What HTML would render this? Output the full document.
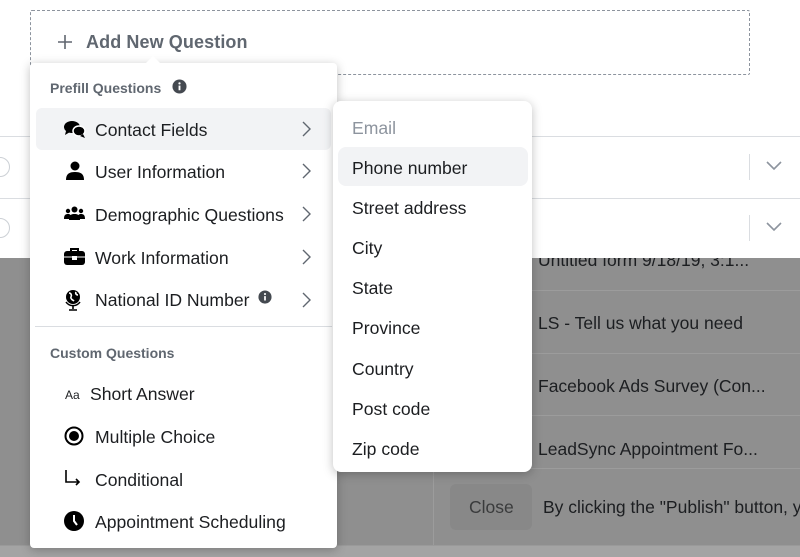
<!DOCTYPE html>
<html><head><meta charset="utf-8"><style>
*{box-sizing:border-box;margin:0;padding:0}
body{width:800px;height:557px;overflow:hidden;position:relative;background:#8f8f8f;font-family:"Liberation Sans",Helvetica,Arial,sans-serif;color:#1c1e21}
.abs{position:absolute}
.top{left:0;top:0;width:800px;height:258px;background:#fff}
.dash{left:30px;top:10px;width:720px;height:65px;border:1px dashed #8d949e;border-radius:2px}
.add{left:86px;top:32px;font-size:18px;font-weight:bold;color:#606770;letter-spacing:0.1px}
.hl{left:0;width:800px;height:1px;background:#dadde1}
.circ{left:-10px;width:20px;height:20px;border:1px solid #ccd0d5;border-radius:50%}
.vd{left:749px;width:1px;height:26px;background:#dadde1}
.chev{left:766px;width:16px;height:10px}
.gl{left:433px;width:367px;height:1px;background:#9c9c9c}
.gt{left:538px;font-size:17.5px;color:#1c1e21}
.menu{left:30px;top:63px;width:307px;height:485px;background:#fff;border-radius:4px;box-shadow:0 2px 10px rgba(0,0,0,.25)}
.sub{left:333px;top:101px;width:199px;height:371px;background:#fff;border-radius:8px;box-shadow:0 2px 10px rgba(0,0,0,.25)}
.it{position:absolute;font-size:17.6px;color:#1c1e21;white-space:nowrap}
.hdr{position:absolute;font-size:14px;font-weight:bold;color:#606770}
.ic{position:absolute;left:34px}
.ch{position:absolute;left:272px;width:10px;height:16px}
</style></head><body>
<div class="abs gt" style="top:250px">Untitled form 9/18/19, 3:1...</div>
<div class="abs top"></div>
<div class="abs dash"></div>
<svg class="abs" style="left:57px;top:34px" width="16" height="16" viewBox="0 0 16 16"><path d="M8 1v14M1 8h14" stroke="#606770" stroke-width="1.6"/></svg>
<div class="abs add">Add New Question</div>
<div class="abs hl" style="top:136px"></div>
<div class="abs hl" style="top:198px"></div>
<div class="abs circ" style="top:157px"></div>
<div class="abs circ" style="top:218px"></div>
<div class="abs vd" style="top:154px"></div>
<div class="abs vd" style="top:215px"></div>
<svg class="abs chev" style="top:161px" viewBox="0 0 16 10"><path d="M1 1l7 7 7-7" fill="none" stroke="#8d949e" stroke-width="1.6"/></svg>
<svg class="abs chev" style="top:222px" viewBox="0 0 16 10"><path d="M1 1l7 7 7-7" fill="none" stroke="#8d949e" stroke-width="1.6"/></svg>

<div class="abs gl" style="top:290px"></div>
<div class="abs gt" style="top:313px">LS - Tell us what you need</div>
<div class="abs gl" style="top:353px"></div>
<div class="abs gt" style="top:376px">Facebook Ads Survey (Con...</div>
<div class="abs gl" style="top:415px"></div>
<div class="abs gt" style="top:439px">LeadSync Appointment Fo...</div>
<div class="abs gl" style="top:468px"></div>
<div class="abs" style="left:433px;top:468px;width:1px;height:78px;background:#9c9c9c"></div>
<div class="abs" style="left:450px;top:484px;width:82px;height:46px;background:#888;border-radius:6px"></div>
<div class="abs" style="left:469px;top:497px;font-size:17.5px;color:#3a3b3c">Close</div>
<div class="abs" style="left:543px;top:497px;font-size:17.5px;color:#1c1e21;white-space:nowrap">By clicking the "Publish" button, yo</div>
<div class="abs" style="left:0;top:545px;width:800px;height:12px;background:#a4a4a4;border-top:1px solid #9a9a9a"></div>

<div class="abs menu">
<svg class="abs" style="left:115px;top:-8px" width="16" height="9"><path d="M0 9L8 1L16 9Z" fill="#fff"/></svg>
<div class="hdr" style="left:20px;top:17px">Prefill Questions</div>
<svg class="abs" style="left:142px;top:16px" width="15" height="15" viewBox="0 0 16 16"><circle cx="8" cy="8" r="7.5" fill="#444950"/><rect x="7" y="7" width="2" height="5" fill="#fff"/><circle cx="8" cy="4.6" r="1.2" fill="#fff"/></svg>
<div class="abs" style="left:6px;top:45px;width:295px;height:42px;background:#f2f3f5;border-radius:6px"></div>

<svg class="ic" style="top:57px" width="22" height="19" viewBox="0 0 22 19"><ellipse cx="8" cy="7" rx="8" ry="6" fill="#000"/><path d="M2 11l-1 4 5-3z" fill="#000"/><ellipse cx="15" cy="11" rx="6" ry="5" fill="#000" stroke="#fff" stroke-width="1.5"/><path d="M19 14l2 4-5-2z" fill="#000"/></svg>
<div class="it" style="left:65px;top:57px">Contact Fields</div>
<svg class="ch" style="top:58px" viewBox="0 0 10 16"><path d="M1 1l7 7-7 7" fill="none" stroke="#606770" stroke-width="1.4"/></svg>

<svg class="ic" style="top:98px;left:36px" width="18" height="20" viewBox="0 0 18 20"><circle cx="9" cy="5" r="4.5" fill="#000"/><path d="M0 19c0-6 3-8 9-8s9 2 9 8z" fill="#000"/></svg>
<div class="it" style="left:65px;top:99px">User Information</div>
<svg class="ch" style="top:100px" viewBox="0 0 10 16"><path d="M1 1l7 7-7 7" fill="none" stroke="#606770" stroke-width="1.4"/></svg>

<svg class="ic" style="top:143px" width="21" height="14" viewBox="0 0 21 14"><circle cx="10.5" cy="3.5" r="3" fill="#000"/><path d="M5 14c0-5 2-6 5.5-6s5.5 1 5.5 6z" fill="#000"/><circle cx="4" cy="5" r="2.2" fill="#000"/><circle cx="17" cy="5" r="2.2" fill="#000"/><path d="M0 13c0-4 1.5-5 4-5s3 1 3 5zM14 13c0-4 .5-5 3-5s4 1 4 5z" fill="#000"/></svg>
<div class="it" style="left:65px;top:142px">Demographic Questions</div>
<svg class="ch" style="top:143px" viewBox="0 0 10 16"><path d="M1 1l7 7-7 7" fill="none" stroke="#606770" stroke-width="1.4"/></svg>

<svg class="ic" style="top:184px" width="21" height="18" viewBox="0 0 21 18"><path d="M7 4V2h7v2" fill="none" stroke="#000" stroke-width="2"/><rect x="0" y="4" width="21" height="14" rx="3" fill="#000"/><rect x="8" y="9" width="5" height="4" fill="#fff"/><path d="M0 10h21" stroke="#fff" stroke-width="1"/></svg>
<div class="it" style="left:65px;top:185px">Work Information</div>
<svg class="ch" style="top:186px" viewBox="0 0 10 16"><path d="M1 1l7 7-7 7" fill="none" stroke="#606770" stroke-width="1.4"/></svg>

<svg class="ic" style="top:226px" width="19" height="22" viewBox="0 0 19 22"><circle cx="9" cy="8" r="7" fill="#000"/><path d="M5 4c2 0 3 2 2 4s2 3 3 4M12 3c-1 2 1 3 2 3" stroke="#fff" stroke-width="1.6" fill="none"/><path d="M2 13a8.5 8.5 0 0 0 14 0" fill="none" stroke="#000" stroke-width="1.5"/><path d="M9 16v4M5 21h8" stroke="#000" stroke-width="1.6"/></svg>
<div class="it" style="left:65px;top:227px">National ID Number</div>
<svg class="abs" style="left:228px;top:227px" width="14" height="14" viewBox="0 0 16 16"><circle cx="8" cy="8" r="7.5" fill="#444950"/><rect x="7" y="7" width="2" height="5" fill="#fff"/><circle cx="8" cy="4.6" r="1.2" fill="#fff"/></svg>
<svg class="ch" style="top:229px" viewBox="0 0 10 16"><path d="M1 1l7 7-7 7" fill="none" stroke="#606770" stroke-width="1.4"/></svg>

<div class="abs" style="left:5px;top:263px;width:297px;height:1px;background:#dadde1"></div>
<div class="hdr" style="left:20px;top:282px">Custom Questions</div>

<div class="abs" style="left:35px;top:325px;font-size:12px;color:#1c1e21">Aa</div>
<div class="it" style="left:60px;top:321px">Short Answer</div>

<svg class="ic" style="top:363px" width="20" height="20" viewBox="0 0 20 20"><circle cx="10" cy="10" r="8.5" fill="none" stroke="#000" stroke-width="2"/><circle cx="10" cy="10" r="5" fill="#000"/></svg>
<div class="it" style="left:65px;top:364px">Multiple Choice</div>

<svg class="ic" style="top:406px" width="18" height="18" viewBox="0 0 18 18"><path d="M2 1v12h13" fill="none" stroke="#000" stroke-width="1.6"/><path d="M12 10l3 3-3 3" fill="none" stroke="#000" stroke-width="1.6"/></svg>
<div class="it" style="left:65px;top:407px">Conditional</div>

<svg class="ic" style="top:448px" width="20" height="20" viewBox="0 0 20 20"><circle cx="10" cy="10" r="10" fill="#000"/><path d="M10 4v6l3 4" fill="none" stroke="#fff" stroke-width="2"/></svg>
<div class="it" style="left:65px;top:449px">Appointment Scheduling</div>
</div>

<div class="abs sub">
<div class="it" style="left:19px;top:17px;color:#8d949e">Email</div>
<div class="abs" style="left:5px;top:46px;width:190px;height:39px;background:#f2f3f5;border-radius:8px"></div>
<div class="it" style="left:19px;top:57px">Phone number</div>
<div class="it" style="left:19px;top:97px">Street address</div>
<div class="it" style="left:19px;top:137px">City</div>
<div class="it" style="left:19px;top:177px">State</div>
<div class="it" style="left:19px;top:217px">Province</div>
<div class="it" style="left:19px;top:258px">Country</div>
<div class="it" style="left:19px;top:298px">Post code</div>
<div class="it" style="left:19px;top:338px">Zip code</div>
</div>
</body></html>
